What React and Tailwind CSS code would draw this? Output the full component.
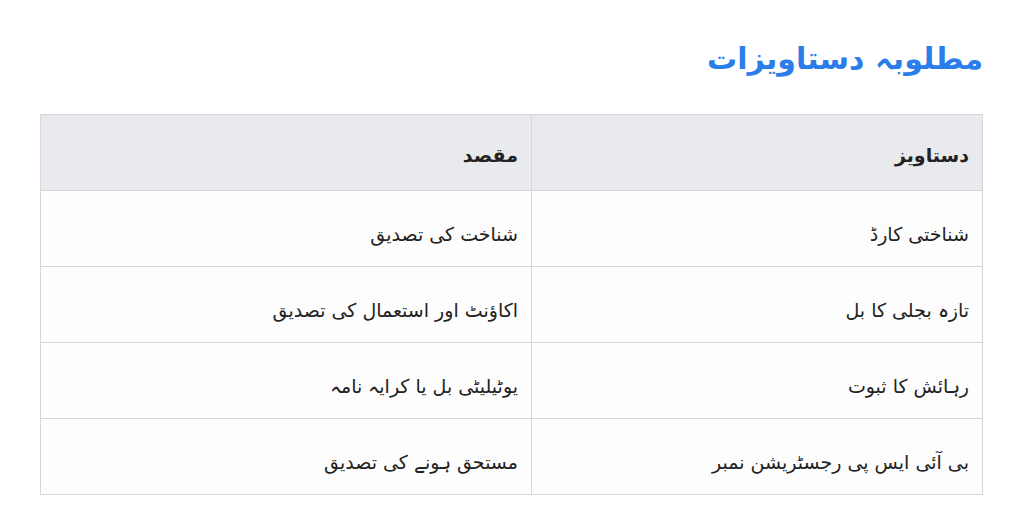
import React from 'react';

const rows = [
  ['شناختی کارڈ', 'شناخت کی تصدیق'],
  ['تازہ بجلی کا بل', 'اکاؤنٹ اور استعمال کی تصدیق'],
  ['رہائش کا ثبوت', 'یوٹیلیٹی بل یا کرایہ نامہ'],
  ['بی آئی ایس پی رجسٹریشن نمبر', 'مستحق ہونے کی تصدیق'],
];

const App = () => {
  return (
    <div dir="rtl" className="min-h-screen bg-white px-[41px] pt-[34px] font-['DejaVu_Sans',sans-serif] text-[#222]">
      {/* Title */}
      <h2 className="text-[30px] font-bold leading-[50px] text-[#2b7de9] mb-[30px]">مطلوبہ دستاویزات</h2>

      {/* Table */}
      <table className="w-[943px] border-collapse border border-[#d3d6da] text-[19px]">
        <thead>
          <tr className="bg-[#e8eaed] h-[76px]">
            <th className="w-[451px] border border-[#d3d6da] px-[13px] pt-[6px] text-right font-bold">دستاویز</th>
            <th className="border border-[#d3d6da] px-[13px] pt-[6px] text-right font-bold">مقصد</th>
          </tr>
        </thead>
        <tbody>
          {rows.map(([doc, purpose]) => (
            <tr key={doc} className="h-[76px] bg-[#fdfdfd]">
              <td className="border border-[#d3d6da] px-[13px] pt-[12px] text-right">{doc}</td>
              <td className="border border-[#d3d6da] px-[13px] pt-[12px] text-right">{purpose}</td>
            </tr>
          ))}
        </tbody>
      </table>
    </div>
  );
};

export default App;
